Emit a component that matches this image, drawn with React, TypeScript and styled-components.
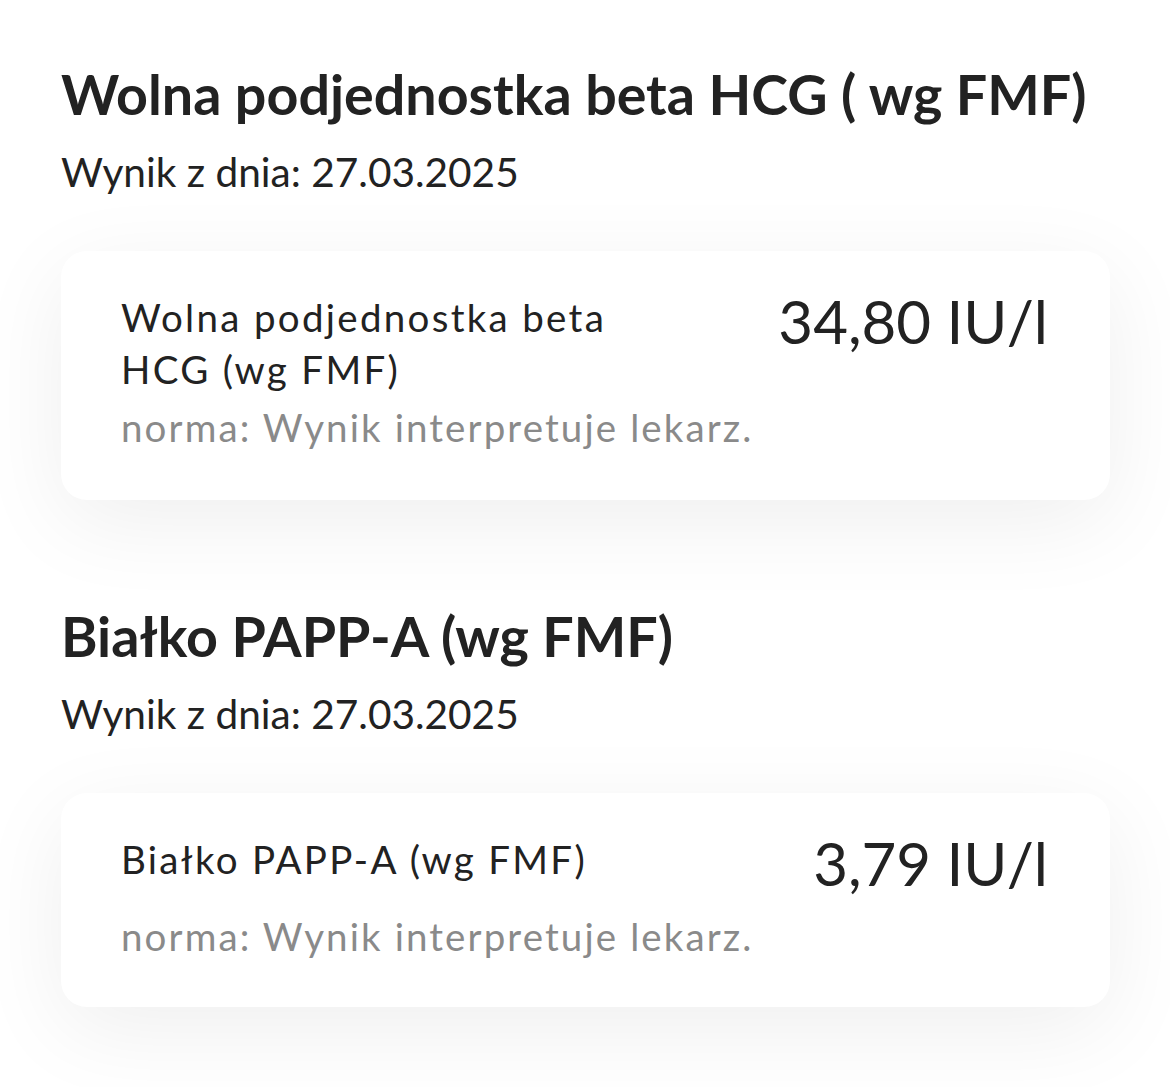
import React from "react";
import styled, { createGlobalStyle } from "styled-components";

const Global = createGlobalStyle`
  html, body { margin: 0; padding: 0; background: #ffffff; }
  body { font-family: Lato, "Noto Sans", sans-serif; color: #222222; }
`;

const Page = styled.div`
  padding: 60px 60px 80px 61px;
  display: flex;
  flex-direction: column;
  gap: 102px;
`;

const Section = styled.section`
  display: flex;
  flex-direction: column;
`;

const Title = styled.h2`
  margin: 0;
  font-size: 55.6px;
  line-height: 68px;
  font-weight: 700;
  color: #222222;
  white-space: nowrap;
`;

const DateLine = styled.div`
  margin-top: 19px;
  font-size: 40.6px;
  line-height: 50px;
  font-weight: 400;
  color: #222222;
`;

const Card = styled.div<{ bottom: number }>`
  margin-top: 54px;
  background: #ffffff;
  border-radius: 26px;
  box-shadow: 0 22px 90px rgba(0, 0, 0, 0.065);
  padding: 40px 62px ${(p) => p.bottom}px 60px;
  display: flex;
  justify-content: space-between;
  align-items: flex-start;
  gap: 24px;
`;

const Info = styled.div<{ gap: number }>`
  display: flex;
  flex-direction: column;
  gap: ${(p) => p.gap}px;
  min-width: 0;
`;

const Name = styled.div`
  font-size: 38.5px;
  line-height: 52px;
  letter-spacing: 2.3px;
  color: #222222;
  max-width: 560px;
`;

const Norm = styled.div`
  font-size: 38.5px;
  line-height: 52px;
  letter-spacing: 2.1px;
  color: #8a8a8a;
  white-space: nowrap;
`;

const Value = styled.div`
  font-size: 60px;
  line-height: 72px;
  color: #222222;
  white-space: nowrap;
  flex-shrink: 0;
  margin-top: -6px;
`;

type Result = {
  title: string;
  date: string;
  name: string;
  value: string;
  gap: number;
  bottom: number;
};

const results: Result[] = [
  {
    title: "Wolna podjednostka beta HCG ( wg FMF)",
    date: "Wynik z dnia: 27.03.2025",
    name: "Wolna podjednostka beta HCG (wg FMF)",
    value: "34,80 IU/l",
    gap: 6,
    bottom: 47,
  },
  {
    title: "Białko PAPP-A (wg FMF)",
    date: "Wynik z dnia: 27.03.2025",
    name: "Białko PAPP-A (wg FMF)",
    value: "3,79 IU/l",
    gap: 25,
    bottom: 45,
  },
];

export default function App() {
  return (
    <>
      <Global />
      <Page>
        {results.map((r) => (
          <Section key={r.title}>
            <Title>{r.title}</Title>
            <DateLine>{r.date}</DateLine>
            <Card bottom={r.bottom}>
              <Info gap={r.gap}>
                <Name>{r.name}</Name>
                <Norm>norma: Wynik interpretuje lekarz.</Norm>
              </Info>
              <Value>{r.value}</Value>
            </Card>
          </Section>
        ))}
      </Page>
    </>
  );
}
